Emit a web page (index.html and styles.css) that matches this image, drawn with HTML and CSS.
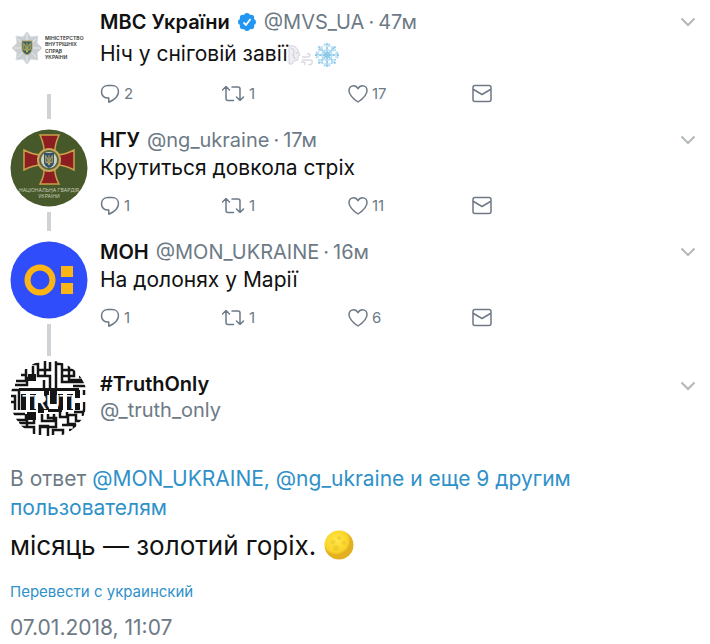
FILE: index.html
```
<!DOCTYPE html>
<html lang="uk">
<head>
    <meta charset="UTF-8">
    <title>#TruthOnly</title>
    <link rel="stylesheet" href="styles.css">
</head>
<body>
    <svg class="sprite" aria-hidden="true">
        <symbol id="reply" viewBox="0 0 20 20">
            <path d="M8 1.500h4c3.800 0 6.500 2.600 6.500 6.200 0 4.300-4.500 8.200-9.700 10.600v-4.200H8C4.200 14.100 1.500 11.500 1.500 7.800S4.200 1.500 8 1.500z"/>
        </symbol>
        <symbol id="retweet" viewBox="1 0 23 20">
            <path d="M1.500 6 5 2.500 8.500 6M5 3v11.500q0 2 2 2h5.500M11 3h6q2 0 2 2v11.500M15.500 13 19 16.500l3.500-3.500"/>
        </symbol>
        <symbol id="like" viewBox="0 0 20 20">
            <path d="M10 18C7 16 1 11.500 1 6.500 1 3.700 3 1.700 5.500 1.700c2 0 3.600 1.100 4.500 3 .9-1.900 2.500-3 4.500-3C17 1.700 19 3.700 19 6.500 19 11.500 13 16 10 18z"/>
        </symbol>
        <symbol id="mail" viewBox="0 0 20 20">
            <rect x="1" y="1.500" width="18" height="16" rx="2"/>
            <path d="M1.500 5.500 10 10.500l8.500-5"/>
        </symbol>
        <symbol id="chevron" viewBox="0 0 16 10">
            <path d="M1.500 1.500 8 8l6.500-6.500"/>
        </symbol>
        <symbol id="trident" viewBox="0 0 10 14">
            <path d="M1 1v9h2.500L5 13l1.500-3H9V1M5 1v12M1 3c3 1 3 4 2.500 7M9 3C6 4 6 7 6.500 10"/>
        </symbol>
    </svg>
    <main class="thread">
        <article class="tweet first">
            <div class="side">
                <svg class="avatar" viewBox="0 0 78 78" role="img" aria-label="МВС України">
                    <path d="M17 21l4 5 7-1-1 7 5 5-5 5 1 7-7-1-4 5-4-5-7 1 1-7-5-5 5-5-1-7 7 1z" fill="#c9ced3" stroke="#d9dcdf"/>
                    <path d="M17 23v28M4 37h26M8 28l18 18M26 28 8 46" stroke="#e9ebed"/>
                    <path d="M12 30h10v8q0 4-5 6-5-2-5-6z" fill="#355d6b" stroke="#b7a65d"/>
                    <svg x="13" y="31" width="8" height="11"><use href="#trident" class="gold"/></svg>
                    <g class="ministry">
                        <text x="35" y="29">МІНІСТЕРСТВО</text>
                        <text x="35" y="35">ВНУТРІШНІХ</text>
                        <text x="35" y="42">СПРАВ</text>
                        <text x="35" y="48">УКРАЇНИ</text>
                    </g>
                </svg>
                <span class="line"></span>
            </div>
            <div class="content">
                <header class="head">
                    <b class="name">МВС України</b>
                    <svg class="verified" viewBox="0 0 20 20" role="img" aria-label="verified">
                        <g fill="#2196f3">
                            <circle cx="10" cy="10" r="7.500"/>
                            <circle cx="10" cy="4" r="3"/><circle cx="14.200" cy="5.800" r="3"/>
                            <circle cx="16" cy="10" r="3"/><circle cx="14.200" cy="14.200" r="3"/>
                            <circle cx="10" cy="16" r="3"/><circle cx="5.800" cy="14.200" r="3"/>
                            <circle cx="4" cy="10" r="3"/><circle cx="5.800" cy="5.800" r="3"/>
                        </g>
                        <path d="M6.500 10.500 9 13l4.500-6" fill="none" stroke="#fff" stroke-width="1.800"/>
                    </svg>
                    <span class="handle"><span>@MVS_UA</span><span>·</span><span>47м</span></span>
                    <button class="more" aria-label="more"><svg><use href="#chevron"/></svg></button>
                </header>
                <p class="text">Ніч у сніговій завії<svg class="wind" viewBox="0 0 26 26" aria-hidden="true">
                        <path d="M1 4c5-1 8 1 9 5l2 4-2 1v4l-4 1-2 3H1z" fill="#f0eef3" stroke="#d5d2de"/>
                        <path d="M3 6c3 1 4 4 2 7l2 4M8 11h2" stroke="#cbc8d6"/>
                        <path d="M14 15h5q3 0 3-2t-3-1M14 18h8q3 0 2 3t-4 1M13 20h3q2 1 0 3" stroke="#dcdbe1" stroke-width="1.500"/>
                    </svg><svg class="snow" viewBox="0 0 26 26" aria-hidden="true">
                        <g fill="none" stroke="#8fc9ea" stroke-width="1.800">
                            <path d="M13 1v24M1 13h24M4.500 4.500l17 17M21.500 4.500l-17 17"/>
                            <path d="M10 2l3 3 3-3M10 24l3-3 3 3M2 10l3 3-3 3M24 10l-3 3 3 3M4 8h4V4M18 4v4h4M4 18h4v4M18 22v-4h4" stroke="#a9d8f2"/>
                            <circle cx="13" cy="13" r="5" stroke="#b5dff5"/>
                            <circle cx="13" cy="13" r="9" stroke="#cfeaf8" stroke-dasharray="3 2"/>
                        </g>
                    </svg></p>
                <footer class="actions">
                    <button><svg class="i-reply"><use href="#reply"/></svg>2</button>
                    <button><svg class="i-retweet"><use href="#retweet"/></svg>1</button>
                    <button><svg class="i-like"><use href="#like"/></svg>17</button>
                    <button aria-label="mail"><svg class="i-mail"><use href="#mail"/></svg></button>
                </footer>
            </div>
        </article>

        <article class="tweet">
            <div class="side">
                <svg class="avatar" viewBox="0 0 78 78" role="img" aria-label="НГУ">
                    <circle cx="39" cy="39" r="38.500" fill="#47592b"/>
                    <g fill="#8c1d20" stroke="#c9a049" stroke-width="1.500">
                        <path d="M30 6h19q-5 11-4 19H34q1-8-4-19zM30 55h19q-5-9-4-17H34q1 8-4 17z"/>
                        <path d="M14 21v20q9-5 18-5V26q-9 0-18-5zM64 21v20q-9-5-18-5V26q9 0 18-5z"/>
                    </g>
                    <circle cx="39" cy="31" r="11" fill="#59683c" stroke="#c9a65a" stroke-width="2"/>
                    <circle cx="39" cy="31" r="8" fill="#cbd0c9"/>
                    <path d="M34 24h10v9q0 4-5 6-5-2-5-6z" fill="#36506e"/>
                    <svg x="35" y="25" width="8" height="12"><use href="#trident" class="gold"/></svg>
                    <g class="guard">
                        <text x="39" y="63">НАЦІОНАЛЬНА ГВАРДІЯ</text>
                        <text x="39" y="69">УКРАЇНИ</text>
                    </g>
                </svg>
                <span class="line"></span>
            </div>
            <div class="content">
                <header class="head">
                    <b class="name">НГУ</b>
                    <span class="handle"><span>@ng_ukraine</span><span>·</span><span>17м</span></span>
                    <button class="more" aria-label="more"><svg><use href="#chevron"/></svg></button>
                </header>
                <p class="text">Крутиться довкола стріх</p>
                <footer class="actions">
                    <button><svg class="i-reply"><use href="#reply"/></svg>1</button>
                    <button><svg class="i-retweet"><use href="#retweet"/></svg>1</button>
                    <button><svg class="i-like"><use href="#like"/></svg>11</button>
                    <button aria-label="mail"><svg class="i-mail"><use href="#mail"/></svg></button>
                </footer>
            </div>
        </article>

        <article class="tweet third">
            <div class="side">
                <svg class="avatar" viewBox="0 0 78 78" role="img" aria-label="МОН">
                    <circle cx="39" cy="39" r="38.500" fill="#2f4dfa"/>
                    <circle cx="30" cy="39" r="12.500" fill="none" stroke="#fdb515" stroke-width="6"/>
                    <path d="M51 25h12v11H51zM51 42h12v11H51z" fill="#fdb515"/>
                </svg>
                <span class="line"></span>
            </div>
            <div class="content">
                <header class="head">
                    <b class="name">МОН</b>
                    <span class="handle"><span>@MON_UKRAINE</span><span>·</span><span>16м</span></span>
                    <button class="more" aria-label="more"><svg><use href="#chevron"/></svg></button>
                </header>
                <p class="text">На долонях у Марії</p>
                <footer class="actions">
                    <button><svg class="i-reply"><use href="#reply"/></svg>1</button>
                    <button><svg class="i-retweet"><use href="#retweet"/></svg>1</button>
                    <button><svg class="i-like"><use href="#like"/></svg>6</button>
                    <button aria-label="mail"><svg class="i-mail"><use href="#mail"/></svg></button>
                </footer>
            </div>
        </article>

        <article class="tweet author">
            <div class="side">
                <svg class="avatar" viewBox="0 0 78 78" role="img" aria-label="#TruthOnly">
                    <clipPath id="round"><circle cx="39" cy="39" r="38.500"/></clipPath>
                    <g clip-path="url(#round)">
                        <path d="M0 0h78v78H0z" fill="#fff"/>
                        <!-- maze walls -->
                        <g fill="none" stroke="#151515" stroke-width="2.500">
                            <path d="M16 9v12H6M11 15h5M5 25h12v-7h6V6M22 4h6v12h12v12M28 10h7V1M34 20v8M40 2v8h-5v5M46 1v27M46 4h6v12h12v-5M52 10h7M59 5v15h14M57 10h8M52 16v6h22M69 17h7M63 26h13"/>
                            <path d="M1 30h8v20M1 36h4v8M1 42h4v8M1 54h14M6 60h10v-6M11 67h13v7M17 57v11M30 75v-9h8v10M32 54v7h12v-7M38 54v4h8v9H31M43 75v-5h10v5M50 52v5h8v7h8M57 52v3h9v6h9M52 65h12v5M59 70h12M64 52h9v4M74 30v5M74 42v10M24 54v9H9M65 64v8"/>
                        </g>
                        <!-- dark blocks between the letters -->
                        <path d="M9 28h60v3H9zM11 34h5v16h-5zM20 34h6v16h-6zM34 29h5v21h-5zM28 42h6v11h-6zM40 29h7v15h-7zM38 49h14v3H38zM48 34h5v16h-5zM57 34h6v16h-6zM65 30h5v8h-5zM65 43h5v7h-5zM17 52h9v8h-9zM18 14h8v7h-8z" fill="#151515"/>
                        <text class="truth" x="18 30 43 55 67" y="49">TRUTH</text>
                    </g>
                </svg>
            </div>
            <div class="content">
                <header class="head">
                    <div class="who">
                        <b class="name">#TruthOnly</b>
                        <span class="handle">@_truth_only</span>
                    </div>
                    <button class="more" aria-label="more"><svg><use href="#chevron"/></svg></button>
                </header>
            </div>
        </article>

        <section class="detail">
            <p class="replying">В ответ <a href="#">@MON_UKRAINE, @ng_ukraine и еще 9 другим пользователям</a></p>
            <p class="status">місяць — золотий горіх. <svg class="moon" viewBox="0 0 30 30" role="img" aria-label="moon">
                <defs>
                    <radialGradient id="glow" cx="40%" cy="35%">
                        <stop offset="0" stop-color="#ffe84a"/>
                        <stop offset=".8" stop-color="#fad428"/>
                        <stop offset="1" stop-color="#e2b020"/>
                    </radialGradient>
                </defs>
                <circle cx="15" cy="15" r="14.500" fill="url(#glow)"/>
                <g fill="#dfae20" opacity=".3">
                    <circle cx="9" cy="12" r="2.500"/><circle cx="15" cy="8" r="2"/><circle cx="12" cy="18" r="3"/>
                    <circle cx="20" cy="13" r="2"/><circle cx="20" cy="23" r="2"/><circle cx="24" cy="17" r="1"/>
                </g>
            </svg></p>
            <p class="translate"><a href="#">Перевести с украинский</a></p>
            <time class="date" datetime="2018-01-07T11:07">07.01.2018, 11:07</time>
        </section>
    </main>
</body>
</html>
```
FILE: styles.css
```
body {
    margin: 0;
    font-family: "Inter", "Liberation Sans", sans-serif;
    font-size: 21px;
    line-height: 28px;
    color: #111;
    background-color: #fff;
    overflow-x: hidden;
}
p {
    margin: 0;
}
a {
    color: #2f91c9;
    text-decoration: none;
}
button {
    padding: 0;
    border: 0;
    background: none;
    font: inherit;
    color: inherit;
    cursor: pointer;
}
svg {
    fill: none;
    flex: none;
}
.sprite {
    position: absolute;
    width: 0;
    height: 0;
}
.thread {
    padding: 0 14px 0 10px;
}
.tweet {
    display: flex;
    gap: 12px;
}
.first {
    padding-top: 8px;
}
.side {
    display: flex;
    flex-direction: column;
    align-items: center;
    padding-top: 3px;
}
.avatar {
    width: 78px;
    height: 78px;
}
.line {
    flex: 1;
    width: 4px;
    margin: 5px 0 7px;
    background-color: #cfd3d6;
}
.content {
    flex: 1;
    padding-bottom: 22px;
}
.head {
    display: flex;
    align-items: center;
    gap: 7px;
    font-size: 20px;
}
.name {
    font-weight: 600;
}
.handle {
    display: flex;
    gap: 4px;
    color: #6d7a86;
}
.verified {
    width: 20px;
    height: 20px;
}
.more {
    display: flex;
    margin-left: auto;
    color: #b3b8bc;
}
.more svg {
    width: 16px;
    height: 10px;
    stroke: currentColor;
    stroke-width: 2px;
}
.text svg {
    width: 26px;
    height: 26px;
    vertical-align: middle;
}
.first .text {
    line-height: 36px;
}
.first .actions {
    margin-top: 12px;
}
.actions {
    display: grid;
    grid-template-columns: 122px 126px 124px 124px;
    height: 20px;
    margin-top: 14px;
    font-size: 15px;
    line-height: 20px;
    color: #6d7a86;
}
.actions button {
    display: flex;
    align-items: center;
    gap: 4px;
}
.actions svg {
    width: 20px;
    height: 20px;
    stroke: currentColor;
    stroke-width: 1.5px;
    stroke-linecap: round;
    stroke-linejoin: round;
}
.actions .i-retweet {
    width: 23px;
}
.gold {
    stroke: #e4c74e;
}
.ministry {
    fill: #333;
    font-size: 5px;
    font-weight: 600;
}
.guard {
    fill: #c3c9b4;
    font-size: 5px;
    text-anchor: middle;
}
.truth {
    fill: #fff;
    font-family: "Liberation Sans", sans-serif;
    font-size: 20px;
    text-anchor: middle;
}
.third .content {
    padding-bottom: 29px;
}
.third .line {
    margin-bottom: 1px;
}
.author .content {
    padding: 14px 0 0;
}
.author .head {
    align-items: flex-start;
}
.author .more {
    padding-top: 10px;
}
.who {
    display: flex;
    flex-direction: column;
    line-height: 26px;
}
.detail {
    padding-top: 26px;
}
.replying {
    max-width: 600px;
    line-height: 29px;
    color: #6d7a86;
}
.status {
    padding: 6px 0 8px;
    font-size: 26px;
    line-height: 36px;
}
.moon {
    width: 30px;
    height: 30px;
    vertical-align: -5px;
}
.translate {
    font-size: 15px;
    line-height: 40px;
}
.date {
    display: block;
    line-height: 32px;
    color: #6d7a86;
}
```
